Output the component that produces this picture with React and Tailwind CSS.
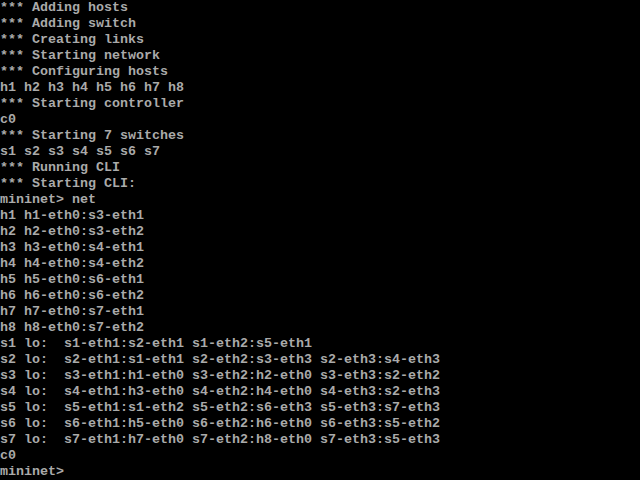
const lines = [
  "*** Adding hosts",
  "*** Adding switch",
  "*** Creating links",
  "*** Starting network",
  "*** Configuring hosts",
  "h1 h2 h3 h4 h5 h6 h7 h8",
  "*** Starting controller",
  "c0",
  "*** Starting 7 switches",
  "s1 s2 s3 s4 s5 s6 s7",
  "*** Running CLI",
  "*** Starting CLI:",
  "mininet> net",
  "h1 h1-eth0:s3-eth1",
  "h2 h2-eth0:s3-eth2",
  "h3 h3-eth0:s4-eth1",
  "h4 h4-eth0:s4-eth2",
  "h5 h5-eth0:s6-eth1",
  "h6 h6-eth0:s6-eth2",
  "h7 h7-eth0:s7-eth1",
  "h8 h8-eth0:s7-eth2",
  "s1 lo:  s1-eth1:s2-eth1 s1-eth2:s5-eth1",
  "s2 lo:  s2-eth1:s1-eth1 s2-eth2:s3-eth3 s2-eth3:s4-eth3",
  "s3 lo:  s3-eth1:h1-eth0 s3-eth2:h2-eth0 s3-eth3:s2-eth2",
  "s4 lo:  s4-eth1:h3-eth0 s4-eth2:h4-eth0 s4-eth3:s2-eth3",
  "s5 lo:  s5-eth1:s1-eth2 s5-eth2:s6-eth3 s5-eth3:s7-eth3",
  "s6 lo:  s6-eth1:h5-eth0 s6-eth2:h6-eth0 s6-eth3:s5-eth2",
  "s7 lo:  s7-eth1:h7-eth0 s7-eth2:h8-eth0 s7-eth3:s5-eth3",
  "c0",
  "mininet>",
];

export default function App() {
  return (
    <div className="w-[640px] h-[480px] bg-black overflow-hidden">
      <pre className="m-0 font-['Liberation_Mono',monospace] font-bold text-[13.33px] leading-4 text-[#aaaaaa]">
        {lines.map((l, i) => (
          <div key={i} className="h-4">{l}</div>
        ))}
      </pre>
    </div>
  );
}
